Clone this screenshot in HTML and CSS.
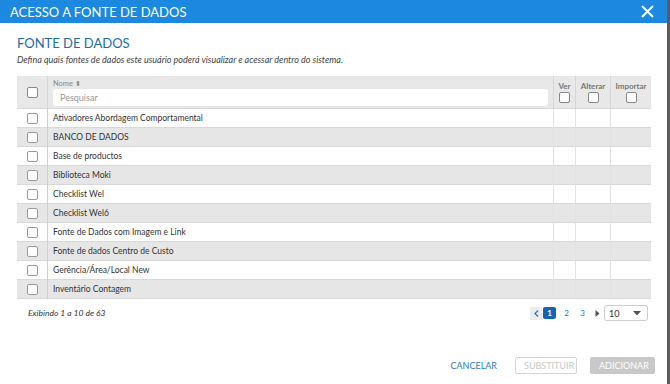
FILE: index.html
```html
<!DOCTYPE html>
<html lang="pt">

<head>
    <meta charset="UTF-8">
    <title>Acesso a fonte de dados</title>
    <link rel="stylesheet" href="styles.css">
</head>

<body>
    <div class="modal">
        <div class="modal-header">
            <h1>ACESSO A FONTE DE DADOS</h1>
            <span class="close">
                <svg width="13" height="13" viewBox="0 0 13 13"><path d="M1 1L12 12M12 1L1 12" stroke="#fff" stroke-width="2" /></svg>
            </span>
        </div>
        <div class="modal-body">
            <h2>FONTE DE DADOS</h2>
            <p class="hint">Defina quais fontes de dados este usuário poderá visualizar e acessar dentro do sistema.</p>

            <table class="grid">
                <thead>
                    <tr>
                        <th class="col-check"><span class="box"></span></th>
                        <th class="col-name">
                            <div class="label">Nome <span class="sort">&#x2B0D;</span></div>
                            <input type="text" placeholder="Pesquisar">
                        </th>
                        <th class="col-perm ver"><div class="label">Ver</div><span class="box"></span></th>
                        <th class="col-perm alt"><div class="label">Alterar</div><span class="box"></span></th>
                        <th class="col-perm imp"><div class="label">Importar</div><span class="box"></span></th>
                    </tr>
                </thead>
                <tbody id="rows"></tbody>
            </table>

            <div class="table-foot">
                <span class="count">Exibindo 1 a 10 de 63</span>
                <div class="pager">
                    <span class="prev">
                        <svg width="5" height="7" viewBox="0 0 5 7"><path d="M4 0.5L1 3.5L4 6.5" stroke="#2b7bc4" stroke-width="1.4" fill="none" /></svg>
                    </span>
                    <span class="page active">1</span>
                    <span class="page">2</span>
                    <span class="page">3</span>
                    <span class="next">
                        <svg width="5" height="7" viewBox="0 0 5 7"><path d="M0.5 0L4.5 3.5L0.5 7Z" fill="#555" /></svg>
                    </span>
                    <div class="size">
                        <span>10</span>
                        <svg width="8" height="5" viewBox="0 0 8 5"><path d="M0 0H8L4 4.5Z" fill="#555" /></svg>
                    </div>
                </div>
            </div>
        </div>
        <div class="modal-footer">
            <button class="link">CANCELAR</button>
            <button class="outline" disabled>SUBSTITUIR</button>
            <button class="solid" disabled>ADICIONAR</button>
        </div>
    </div>

    <script>
        const names = ['Ativadores Abordagem Comportamental', 'BANCO DE DADOS', 'Base de productos', 'Biblioteca Moki', 'Checklist Wel', 'Checklist Wel6', 'Fonte de Dados com Imagem e Link', 'Fonte de dados Centro de Custo', 'Gerência/Área/Local New', 'Inventário Contagem'];

        const tbody = document.getElementById('rows');
        names.forEach((name) => {
            const tr = document.createElement('tr');
            tr.innerHTML = '<td class="col-check"><span class="box"></span></td>' +
                '<td class="col-name"></td><td></td><td></td><td></td>';
            tr.querySelector('.col-name').textContent = name;
            tbody.appendChild(tr);
        });
    </script>
</body>

</html>
```

FILE: styles.css
```css
body {
    margin: 0;
    padding: 0;
    background-color: #5c5c5c;
    font-family: Lato, "Open Sans", sans-serif;
}

.modal {
    width: 667px;
    height: 384px;
    background-color: #ffffff;
    display: flex;
    flex-direction: column;
}

.modal-header {
    height: 23px;
    background-color: #1c88df;
    display: flex;
    align-items: center;
    justify-content: space-between;
    padding: 0 13px 0 10px;
}

.modal-header h1 {
    margin: 0;
    color: #ffffff;
    font-size: 13px;
    font-weight: 400;
}

.close {
    display: flex;
}

.modal-body {
    padding: 0 16px 0 17px;
    flex: 1;
}

.modal-body h2 {
    margin: 12px 0 0 0;
    color: #1d6bab;
    font-size: 13px;
    font-weight: 400;
    line-height: 16px;
}

.hint {
    margin: 3px 0 0 0;
    font-size: 9px;
    font-style: italic;
    color: #444444;
    line-height: 12px;
}

.grid {
    margin-top: 10px;
    width: 634px;
    border-collapse: collapse;
    font-size: 8.5px;
    color: #333333;
}

.grid thead tr {
    background-color: #e8e8e8;
    height: 32px;
}

.grid th {
    padding: 0;
    font-weight: 400;
    border-right: 1px solid #d6d6d6;
    vertical-align: middle;
}

.grid th:last-child {
    border-right: none;
}

.grid .col-check {
    width: 30px;
    text-align: center;
}

.grid th.col-name {
    text-align: left;
    padding: 2px 5px 2px 5px;
}

.label {
    font-size: 7.5px;
    color: #888888;
    line-height: 10px;
    height: 10px;
}

.grid .col-perm .label {
    font-weight: 700;
    color: #777777;
    font-size: 8px;
}

.sort {
    font-size: 7px;
}

.grid input {
    display: block;
    box-sizing: border-box;
    width: 100%;
    height: 17px;
    margin-top: 1px;
    border: none;
    border-radius: 3px;
    padding: 0 7px;
    font-family: Lato, "Open Sans", sans-serif;
    font-size: 9px;
    background: #ffffff;
}

.grid input::placeholder {
    color: #999999;
}

.grid .ver {
    width: 21px;
}

.grid .alt {
    width: 34px;
}

.grid .imp {
    width: 40px;
}

.grid th.col-perm {
    text-align: center;
    padding-top: 2px;
    padding-bottom: 2px;
}

.box {
    display: inline-block;
    width: 9px;
    height: 9px;
    border: 1px solid #888888;
    border-radius: 2px;
    background: #ffffff;
    vertical-align: middle;
}

.grid tbody tr {
    height: 19px;
    border-top: 1px solid #d8d8d8;
}

.grid tbody tr:nth-child(even) {
    background-color: #e6e6e6;
}

.grid tbody tr:last-child {
    border-bottom: 1px solid #d8d8d8;
}

.grid td {
    padding: 0;
    border-right: 1px solid #e2e2e2;
}

.grid td:first-child {
    border-right: 1px solid #d0d0d0;
}

.grid td:last-child {
    border-right: none;
}

.grid td.col-name {
    padding-left: 5px;
}

.grid tbody .box {
    border-color: #9a9a9a;
}

.table-foot {
    display: flex;
    justify-content: space-between;
    align-items: center;
    margin-top: 6px;
    padding: 0 3px 0 11px;
}

.count {
    font-size: 8.5px;
    font-style: italic;
    color: #333333;
}

.pager {
    display: flex;
    align-items: center;
    font-size: 8px;
}

.prev {
    width: 12px;
    height: 13px;
    background-color: #ececec;
    display: flex;
    align-items: center;
    justify-content: center;
    margin-right: 1px;
}

.page {
    width: 13px;
    height: 12px;
    line-height: 12px;
    text-align: center;
    color: #2b7bc4;
    margin-right: 3px;
}

.page.active {
    background-color: #1565ae;
    color: #ffffff;
    border-radius: 2px;
    font-weight: 700;
    margin-right: 4px;
}

.next {
    display: flex;
    width: 10px;
    justify-content: center;
}

.size {
    margin-left: 2px;
    width: 44px;
    height: 16px;
    box-sizing: border-box;
    border: 1px solid #cccccc;
    border-radius: 3px;
    display: flex;
    align-items: center;
    justify-content: space-between;
    padding: 0 6px 0 4px;
    font-size: 9px;
    color: #333333;
}

.modal-footer {
    display: flex;
    justify-content: flex-end;
    align-items: center;
    gap: 13px;
    padding: 0 12px 10px 0;
}

.modal-footer button {
    font-family: Lato, "Open Sans", sans-serif;
    font-size: 9px;
    height: 17px;
    border-radius: 2px;
    padding: 0 8px;
    background: none;
    border: 1px solid transparent;
}

.modal-footer .link {
    color: #2b7bc4;
    padding: 0 4px;
}

.modal-footer .outline {
    border-color: #d4d4d4;
    color: #c8c8c8;
    width: 62px;
}

.modal-footer .solid {
    background-color: #c8c8c8;
    color: #ffffff;
    width: 65px;
}
```
